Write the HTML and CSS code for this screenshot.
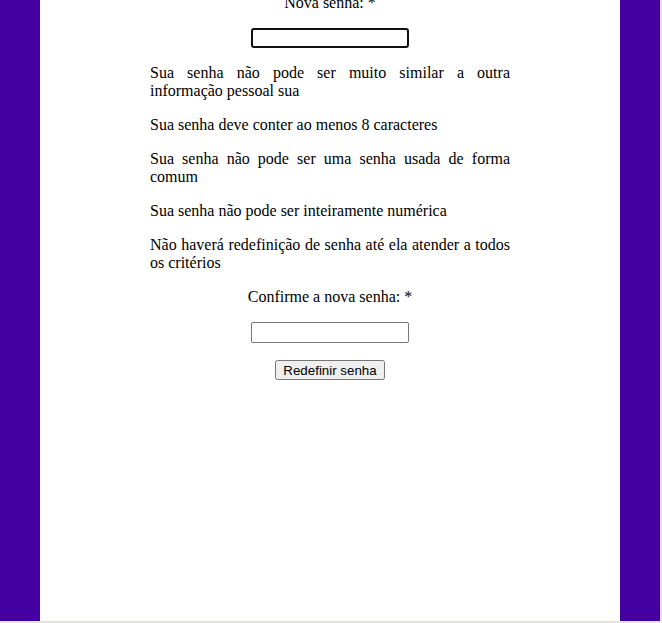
FILE: index.html
```html
<!DOCTYPE html>
<html lang="pt-BR">
<head>
<meta charset="utf-8">
<title>Redefinir senha</title>
<link rel="stylesheet" href="styles.css">
</head>
<body>
<div class="page">
  <main class="column">
    <form class="form">
      <p class="label first">Nova senha: *</p>
      <p class="field"><input type="password" class="input" autofocus></p>
      <p class="help">Sua senha não pode ser muito similar a outra informação pessoal sua</p>
      <p class="help">Sua senha deve conter ao menos 8 caracteres</p>
      <p class="help">Sua senha não pode ser uma senha usada de forma comum</p>
      <p class="help">Sua senha não pode ser inteiramente numérica</p>
      <p class="help">Não haverá redefinição de senha até ela atender a todos os critérios</p>
      <p class="label">Confirme a nova senha: *</p>
      <p class="field"><input type="password" class="input"></p>
      <p class="field"><button type="button" class="btn">Redefinir senha</button></p>
    </form>
  </main>
</div>
</body>
</html>
```

FILE: styles.css
```css
html {
  background: #e6e3df;
}
body {
  margin: 0;
  font-family: "Liberation Serif", "Times New Roman", serif;
  font-size: 16px;
  line-height: 18px;
  color: #000;
}
.page {
  width: 660px;
  height: 621px;
  background: #4400a0;
  display: flex;
  justify-content: center;
  overflow: hidden;
}
.column {
  width: 580px;
  background: #fff;
}
.form {
  width: 360px;
  margin: 0 auto;
}
.form p {
  margin: 16px 0;
}
.label {
  text-align: center;
}
.label.first {
  margin-top: -6px;
}
.field {
  text-align: center;
}
.help {
  text-align: justify;
}
.input {
  width: 158px;
  height: 21px;
  box-sizing: border-box;
  font-size: 13.33px;
  border: 1px solid #767676;
  border-radius: 2px;
  padding: 1px 2px;
  margin: 0;
  vertical-align: top;
}
.input:focus {
  outline: none;
  border: 2px solid #101010;
  border-radius: 3px;
  padding: 0 1px;
  height: 20px;
}
.btn {
  font-family: "Liberation Sans", Arial, sans-serif;
  font-size: 13.33px;
  padding: 1px 6px;
  height: 20px;
  margin: 1px 0 0;
  vertical-align: top;
}
```
